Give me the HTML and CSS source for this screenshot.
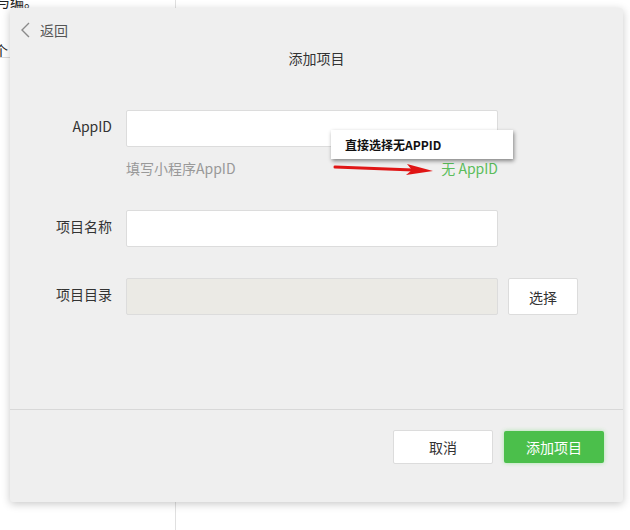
FILE: index.html
```html
<!DOCTYPE html>
<html lang="zh">
<head>
<meta charset="utf-8">
<link rel="stylesheet" href="styles.css">
</head>
<body>
<div class="page">
  <div class="bg-text t1">与编。</div>
  <div class="bg-text t2">个</div>
  <div class="bg-hline"></div>
  <div class="bg-vline"></div>

  <div class="dialog">
    <div class="back">
      <svg class="chev" width="11" height="16" viewBox="0 0 11 16"><path d="M9 1 L2 8 L9 15" fill="none" stroke="#8a8a8a" stroke-width="1.4"/></svg>
      <span>返回</span>
    </div>
    <div class="title">添加项目</div>

    <div class="form">
      <div class="row">
        <label class="lbl">AppID</label>
        <div class="field">
          <div class="input"></div>
          <div class="hint-row">
            <span class="hint">填写小程序AppID</span>
            <span class="noappid">无 AppID</span>
          </div>
        </div>
      </div>
      <div class="row r2">
        <label class="lbl">项目名称</label>
        <div class="field"><div class="input"></div></div>
      </div>
      <div class="row r3">
        <label class="lbl">项目目录</label>
        <div class="field dir">
          <div class="input disabled"></div>
          <div class="btn choose">选择</div>
        </div>
      </div>
    </div>

    <div class="footer">
      <div class="btn cancel">取消</div>
      <div class="btn primary">添加项目</div>
    </div>

    <div class="callout">直接选择无APPID</div>
    <svg class="arrow" width="104" height="14" viewBox="0 0 104 14">
      <path d="M2 5 L80 8" stroke="#e01515" stroke-width="3" fill="none" stroke-linecap="round"/>
      <path d="M74 2 L100 9 L73 13 L79 8 Z" fill="#e01515"/>
    </svg>
  </div>
</div>
</body>
</html>
```
FILE: styles.css
```css
* { box-sizing: border-box; }
html, body { margin: 0; padding: 0; }
body {
  width: 630px;
  height: 530px;
  background: #ffffff;
  font-family: "Noto Sans CJK SC", "Noto Sans", sans-serif;
  color: #333;
  overflow: hidden;
}
.page { position: relative; width: 630px; height: 530px; }
.bg-text { position: absolute; font-size: 14px; color: #222; }
.t1 { left: -4px; top: -9px; }
.t2 { left: -6px; top: 40px; }
.bg-hline { position: absolute; left: 0; top: 57px; width: 10px; height: 1px; background: #dcdcdc; }
.bg-vline { position: absolute; left: 175px; top: 0; width: 1px; height: 530px; background: #e0e0e0; }

.dialog {
  position: absolute;
  left: 10px; top: 8px;
  width: 613px; height: 494px;
  background: #efefef;
  border-radius: 3px;
  box-shadow: 0 2px 8px rgba(0,0,0,0.22);
  display: flex;
  flex-direction: column;
}
.back {
  display: flex; align-items: center; gap: 9px;
  padding: 12px 0 0 10px;
  height: 32px;
  font-size: 14px; color: #555;
}
.chev { display: block; }
.title {
  text-align: center;
  font-size: 14px; color: #333;
  margin-top: 9px;
  height: 18px; line-height: 18px;
}
.form { padding-top: 43px; flex: 1; }
.row { display: flex; align-items: flex-start; }
.lbl {
  width: 102px; text-align: right;
  font-size: 14px; color: #333;
  line-height: 32px; height: 37px;
}
.field { margin-left: 14px; width: 372px; }
.input {
  height: 37px;
  background: #fff;
  border: 1px solid #dcdcdc;
  border-radius: 2px;
}
.input.disabled { background: #ebeae5; }
.hint-row {
  display: flex; justify-content: space-between;
  margin-top: 11px;
  font-size: 14px; line-height: 20px;
}
.hint { color: #999; }
.noappid { color: #5bbd5b; }
.r2 { margin-top: 32px; }
.r3 { margin-top: 31px; }
.dir { display: flex; gap: 10px; width: 452px; }
.dir .input { width: 372px; }
.btn {
  display: flex; align-items: center; justify-content: center;
  font-size: 14px;
  border-radius: 2px;
}
.choose {
  width: 70px; height: 37px;
  background: #fff; border: 1px solid #dcdcdc; color: #333;
}
.footer {
  border-top: 1px solid #d8d8d8;
  height: 93px;
  display: flex; justify-content: flex-end; align-items: flex-start;
  gap: 11px;
  padding: 20px 19px 0 0;
}
.cancel {
  width: 100px; height: 34px;
  background: #fff; border: 1px solid #dcdcdc; color: #333;
}
.primary {
  width: 100px; height: 32px; margin-top: 1px;
  background: #4bbf4b; color: #fff;
  box-shadow: 0 0 4px rgba(80,220,80,0.45);
}
.callout {
  position: absolute;
  left: 321px; top: 122px;
  width: 182px; height: 29px;
  background: #fff;
  box-shadow: 1px 2px 4px rgba(0,0,0,0.45);
  font-size: 12px; font-weight: bold; color: #111;
  padding-left: 14px;
  line-height: 29px;
}
.arrow { position: absolute; left: 323px; top: 154px; }
```
